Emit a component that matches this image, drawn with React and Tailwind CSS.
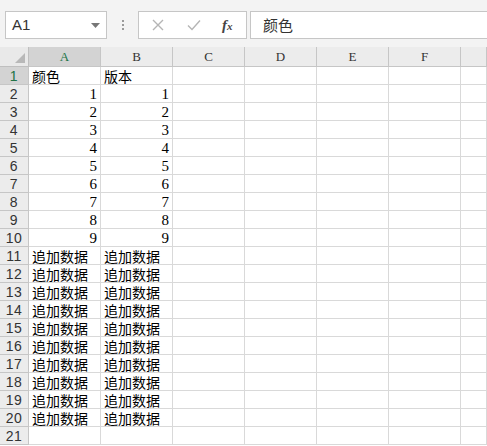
import React from "react";

const cols = ["A", "B", "C", "D", "E", "F", ""];

function buildRows() {
  const rows = [];
  rows.push({ a: "颜色", b: "版本", t: "text" });
  for (let i = 1; i <= 9; i++) rows.push({ a: String(i), b: String(i), t: "num" });
  for (let i = 0; i < 10; i++) rows.push({ a: "追加数据", b: "追加数据", t: "text" });
  rows.push({ a: "", b: "", t: "text" });
  return rows;
}

const rows = buildRows();

function Cell({ value, type }) {
  if (type === "num") {
    return (
      <div className="h-[18px] overflow-hidden border-r border-b border-[#d9d9d9] flex items-center justify-end pr-[3px] text-[15px] leading-[16px] text-black font-['Liberation_Serif',serif]">
        <span className="leading-[16px]">{value}</span>
      </div>
    );
  }
  return (
    <div className="h-[18px] overflow-hidden border-r border-b border-[#d9d9d9] flex items-center pl-[3px] text-[14px] leading-[16px] text-black font-['Noto_Sans_CJK_SC',sans-serif] whitespace-nowrap">
      <span className="leading-[16px]">{value}</span>
    </div>
  );
}

function EmptyCell() {
  return <div className="h-[18px] border-r border-b border-[#d9d9d9]" />;
}

export default function App() {
  return (
    <div className="w-[487px] h-[446px] overflow-hidden bg-white">
      {/* Toolbar */}
      <div className="h-[47px] bg-[#f3f3f3] flex items-start pt-[11px] pl-[5px]">
        <div className="w-[102px] h-[28px] bg-white border border-[#c6c6c6] flex items-center justify-between pl-[6px] pr-[6px]">
          <span className="text-[15px] text-[#333] font-['Liberation_Sans',sans-serif]">A1</span>
          <svg width="9" height="5" viewBox="0 0 9 5">
            <path d="M0 0 L9 0 L4.5 5 Z" fill="#777" />
          </svg>
        </div>
        <div className="w-[31px] h-[28px] flex flex-col items-center justify-center gap-[2px]">
          <span className="w-[2px] h-[2px] bg-[#9a9a9a]" />
          <span className="w-[2px] h-[2px] bg-[#9a9a9a]" />
          <span className="w-[2px] h-[2px] bg-[#9a9a9a]" />
        </div>
        <div className="w-[109px] h-[28px] bg-white border border-[#c6c6c6] flex items-center">
          <svg width="12" height="12" viewBox="0 0 12 12" className="ml-[13px]">
            <path d="M1 1 L11 11 M11 1 L1 11" stroke="#b5b5b5" strokeWidth="1.4" />
          </svg>
          <svg width="14" height="12" viewBox="0 0 14 12" className="ml-[23px]">
            <path d="M1 6.5 L5 10.5 L13 1.5" stroke="#b5b5b5" strokeWidth="1.4" fill="none" />
          </svg>
          <span className="ml-[21px] text-[15px] italic font-bold text-[#444] font-['Liberation_Serif',serif]">
            f<span className="text-[11px]">x</span>
          </span>
        </div>
        <div className="ml-[3px] flex-1 h-[28px] bg-white border border-[#c6c6c6] border-r-0 flex items-center pl-[12px]">
          <span className="text-[15px] text-[#333] font-['Noto_Sans_CJK_SC',sans-serif]">颜色</span>
        </div>
      </div>

      {/* Grid */}
      <div className="grid grid-cols-[29px_repeat(6,72px)_1fr]">
        {/* header row */}
        <div className="relative h-[20px] bg-[#e9e9e9] border-r border-b border-[#bfbfbf]">
          <svg width="10" height="10" viewBox="0 0 10 10" className="absolute right-[3px] bottom-[3px]">
            <path d="M10 0 L10 10 L0 10 Z" fill="#b8b8b8" />
          </svg>
        </div>
        {cols.map((c, i) => (
          <div
            key={i}
            className={
              "h-[20px] border-r border-b border-[#c6c6c6] flex items-center justify-center text-[13px] font-['Liberation_Serif',serif] " +
              (c === "A" ? "bg-[#d3d3d3] text-[#217346]" : "bg-[#ececec] text-[#333]")
            }
          >
            {c}
          </div>
        ))}

        {rows.map((r, ri) => (
          <React.Fragment key={ri}>
            <div
              className={
                "h-[18px] overflow-hidden border-r border-b border-[#c6c6c6] flex items-center justify-center text-[14px] leading-[16px] tracking-[0.5px] font-['Liberation_Sans',sans-serif] " +
                (ri === 0 ? "bg-[#d3d3d3] text-[#217346]" : "bg-[#ececec] text-[#333]")
              }
            >
              {ri + 1}
            </div>
            <Cell value={r.a} type={r.t} />
            <Cell value={r.b} type={r.t} />
            <EmptyCell />
            <EmptyCell />
            <EmptyCell />
            <EmptyCell />
            <EmptyCell />
          </React.Fragment>
        ))}
      </div>
    </div>
  );
}
